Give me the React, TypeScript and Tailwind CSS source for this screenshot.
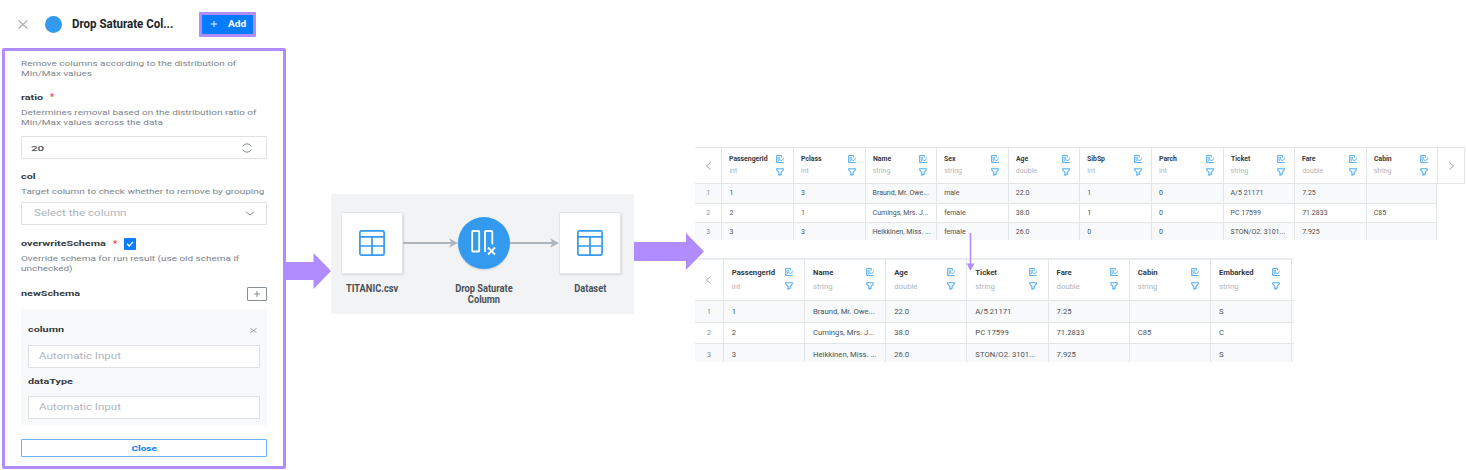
import type { ReactNode } from 'react';

function Wide({ children, className = '' }: { children: ReactNode; className?: string }) {
  return <span className={`inline-block origin-left whitespace-nowrap ${className}`}>{children}</span>;
}

function Hint({ lines }: { lines: string[] }) {
  return (
    <div className="text-[8px] leading-[11px] text-[#7d858c]">
      {lines.map((line) => (
        <div key={line} className="h-[10px]">
          <Wide className="scale-x-[1.247]">{line}</Wide>
        </div>
      ))}
    </div>
  );
}

function Label({ children }: { children: ReactNode }) {
  return (
    <Wide className="scale-x-[1.35] text-[8px] font-bold leading-[10px] text-[#343a40]">{children}</Wide>
  );
}

function Cross({ className }: { className: string }) {
  return (
    <svg className={className} viewBox="0 0 10 10" preserveAspectRatio="none" fill="none" stroke="currentColor" strokeWidth="1.3">
      <path d="M0.5 0.5 9.5 9.5M9.5 0.5 0.5 9.5" />
    </svg>
  );
}

function SettingsPanel() {
  return (
    <section className="flex h-[470px] w-[287px] shrink-0 flex-col pl-[2px]">
      <header className="flex h-[48px] shrink-0 items-center pl-[16px]">
        <Cross className="h-[9px] w-[10px] text-[#a3a9af]" />
        <span className="ml-[17px] h-[17px] w-[17px] rounded-full bg-[#339af0]" />
        <span className="ml-[10px] w-[127px] text-[12px] font-bold text-[#212529]">
          <span className="inline-block origin-left scale-x-[0.96] whitespace-nowrap">Drop Saturate Col...</span>
        </span>
        <button className="flex h-[25px] w-[57px] items-center rounded-[1px] border-[3px] border-[#b08cff] bg-[#087cff] text-white">
          <svg className="ml-[9px] h-[6px] w-[6px]" viewBox="0 0 6 6" stroke="currentColor" strokeWidth="0.9">
            <path d="M3 0V6M0 3H6" />
          </svg>
          <span className="ml-[11px] pt-[1px] text-[8.5px] font-bold">
            <Wide className="scale-x-[1.18]">Add</Wide>
          </span>
        </button>
      </header>
      <div className="flex h-[421px] w-[284px] flex-col rounded-[2px] border-[3px] border-[#b08cff] px-[16px] pt-[7px]">
        <Hint lines={['Remove columns according to the distribution of', 'Min/Max values']} />
        <div className="mt-[13px] flex h-[10px] items-center">
          <span className="w-[29px] leading-[10px]"><Label>ratio</Label></span>
          <span className="pt-[2px] text-[9px] font-bold leading-[10px] text-[#fa3e3e]">*</span>
        </div>
        <div className="mt-[6px]">
          <Hint lines={['Determines removal based on the distribution ratio of', 'Min/Max values across the data']} />
        </div>
        <div className="mt-[9px] flex h-[23px] shrink-0 items-center justify-between rounded-[1px] border border-[#dee2e6] pr-[14px] pl-[9px] text-[8px] text-[#495057]">
          <span className="inline-block origin-left scale-x-[1.45] pt-[2px] font-medium">20</span>
          <svg className="h-[10px] w-[10px] text-[#868e96]" viewBox="0 0 10 10" fill="none" stroke="currentColor">
            <path d="M0.5 3.5Q5 -2 9.5 3.5M0.5 6.5Q5 12 9.5 6.5" />
          </svg>
        </div>
        <div className="mt-[13px] flex h-[10px] items-center"><Label>col</Label></div>
        <div className="mt-[4px]">
          <Hint lines={['Target column to check whether to remove by grouping']} />
        </div>
        <div className="mt-[6px] flex h-[23px] shrink-0 items-center justify-between rounded-[1px] border border-[#dee2e6] pr-[11px] pl-[12px] text-[9px] text-[#adb5bd]">
          <Wide className="scale-x-[1.29] pt-[1px]">Select the column</Wide>
          <svg className="h-[5px] w-[10px] text-[#868e96]" viewBox="0 0 10 5" fill="none" stroke="currentColor">
            <path d="M0.8 0.8 5 4 9.2 0.8" />
          </svg>
        </div>
        <div className="mt-[13px] flex h-[12px] items-center">
          <span className="-mt-[3px] w-[92px] leading-[10px]"><Label>overwriteSchema</Label></span>
          <span className="text-[9px] font-bold leading-[10px] text-[#fa3e3e]">*</span>
          <span className="ml-[7px] flex h-[12px] w-[12px] items-center justify-center rounded-[1px] bg-[#087cff] text-white">
            <svg className="h-[6px] w-[8px]" viewBox="0 0 8 6" fill="none" stroke="currentColor" strokeWidth="1.3">
              <path d="M1 2.8 3.2 5 7 1" />
            </svg>
          </span>
        </div>
        <div className="mt-[3px]">
          <Hint lines={['Override schema for run result (use old schema if', 'unchecked)']} />
        </div>
        <div className="mt-[13px] flex h-[15px] items-center justify-between">
          <Label>newSchema</Label>
          <span className="flex h-[14px] w-[20px] items-center justify-center rounded-[1px] border border-[#868e96] text-[#868e96]">
            <svg className="h-[6px] w-[6px]" viewBox="0 0 6 6" stroke="currentColor">
              <path d="M3 0V6M0 3H6" />
            </svg>
          </span>
        </div>
        <div className="mt-[8px] flex h-[116px] shrink-0 flex-col bg-[#f8f9fb] px-[7px] pt-[16px]">
          <div className="flex h-[10px] items-center justify-between pr-[3px]">
            <Label>column</Label>
            <Cross className="h-[5px] w-[7px] text-[#868e96]" />
          </div>
          <div className="mt-[10px] flex h-[23px] items-center border border-[#dee2e6] bg-white pl-[10px] text-[9px] text-[#adb5bd]">
            <Wide className="scale-x-[1.28] pt-[1px]">Automatic Input</Wide>
          </div>
          <div className="mt-[9px] flex h-[10px] items-center"><Label>dataType</Label></div>
          <div className="mt-[9px] flex h-[23px] items-center border border-[#dee2e6] bg-white pl-[10px] text-[9px] text-[#adb5bd]">
            <Wide className="scale-x-[1.28] pt-[1px]">Automatic Input</Wide>
          </div>
        </div>
        <button className="mt-[14px] flex h-[18px] shrink-0 items-center justify-center rounded-[1px] border border-[#6cb2fb] text-[8px] font-bold text-[#087cff]">
          <span className="inline-block scale-x-[1.25] pt-[1px]">Close</span>
        </button>
      </div>
    </section>
  );
}

function TableIcon() {
  return (
    <svg className="h-[26px] w-[26px]" viewBox="0 0 26 26" fill="none" stroke="#339af0" strokeWidth="1.7">
      <rect x="0.9" y="0.9" width="24.2" height="24.2" rx="1.5" />
      <path d="M1 6.8H25M1 16H25M13 6.8V25" />
    </svg>
  );
}

function Connector() {
  return (
    <svg className="h-[10px] w-full" viewBox="0 0 56 10" preserveAspectRatio="xMaxYMid slice">
      <path d="M0 5H50" stroke="#adb5bd" strokeWidth="1.8" />
      <path d="M47 0.3 56 5 47 9.7 49.5 5Z" fill="#adb5bd" />
    </svg>
  );
}

function NodeCard() {
  return (
    <div className="flex h-[62px] w-[62px] shrink-0 items-center justify-center rounded-[1px] border border-[#e3e6e9] bg-white shadow-[1px_1px_2px_rgba(0,0,0,0.12)]">
      <TableIcon />
    </div>
  );
}

function Caption({ children }: { children: ReactNode }) {
  return (
    <div className="flex w-[80px] justify-center text-center text-[10px] font-bold leading-[10.5px] text-[#495057]">
      <span className="inline-block scale-x-[0.93] whitespace-nowrap">{children}</span>
    </div>
  );
}

function Flow() {
  return (
    <section className="mt-[194px] h-[120px] w-[303px] shrink-0 bg-[#f1f3f5] pt-[18px]">
      <div className="flex items-center pl-[10px]">
        <NodeCard />
        <div className="flex w-[55px] shrink-0"><Connector /></div>
        <div className="flex h-[52px] w-[52px] shrink-0 items-center justify-center rounded-full bg-[#339af0] shadow-[0_1px_2px_rgba(0,0,0,0.15)]">
          <svg className="h-[26px] w-[26px]" viewBox="0 0 26 26" fill="none" stroke="white" strokeWidth="1.8">
            <rect x="1.2" y="1" width="7" height="20.5" rx="0.8" />
            <path d="M14 22V1.8Q14 1 14.8 1H20.5Q21.3 1 21.3 1.8V14.5" />
            <path d="M17 17.5 24 24.5M24 17.5 17 24.5" />
          </svg>
        </div>
        <div className="flex w-[49px] shrink-0"><Connector /></div>
        <NodeCard />
      </div>
      <div className="mt-[10px] flex">
        <div className="w-[82px] shrink-0 pl-[1px]"><Caption>TITANIC.csv</Caption></div>
        <div className="ml-[31px] w-[80px] shrink-0"><Caption>Drop Saturate<br />Column</Caption></div>
        <div className="ml-[26px] w-[80px] shrink-0"><Caption>Dataset</Caption></div>
      </div>
    </section>
  );
}

function ChartIcon() {
  return (
    <svg className="h-[8px] w-[8px]" viewBox="0 0 8 8" fill="none" stroke="#339af0" strokeWidth="0.8">
      <path d="M7.8 7.5H0.6V0.5H5.4V2.6" />
      <path d="M2.1 5.4V1.8M3.6 3.6V1.8" />
      <path d="M1.6 6.6 3.8 4.4 5.4 6 7.7 3.6V2.6" />
    </svg>
  );
}

function FunnelIcon() {
  return (
    <svg className="h-[8px] w-[8px]" viewBox="0 0 8 8" fill="none" stroke="#4dabf7" strokeWidth="1.1" strokeLinejoin="round">
      <path d="M0.7 0.7H7.3V2L5.1 4.4V6.6L2.9 7.3V4.4L0.7 2Z" />
    </svg>
  );
}

function Chevron({ flip = false }: { flip?: boolean }) {
  return (
    <svg className="h-[8px] w-[5px]" viewBox="0 0 5 8" fill="none" stroke="#939aa1" strokeWidth="0.9">
      <path d={flip ? 'M0.5 0.5 4.5 4 0.5 7.5' : 'M4.5 0.5 0.5 4 4.5 7.5'} />
    </svg>
  );
}

type Column = { name: string; type: string; cells: string[] };

const passengerId: Column = { name: 'PassengerId', type: 'int', cells: ['1', '2', '3'] };
const pclass: Column = { name: 'Pclass', type: 'int', cells: ['3', '1', '3'] };
const fullName: Column = { name: 'Name', type: 'string', cells: ['Braund, Mr. Owe...', 'Cumings, Mrs. J...', 'Heikkinen, Miss. ...'] };
const sex: Column = { name: 'Sex', type: 'string', cells: ['male', 'female', 'female'] };
const age: Column = { name: 'Age', type: 'double', cells: ['22.0', '38.0', '26.0'] };
const sibSp: Column = { name: 'SibSp', type: 'int', cells: ['1', '1', '0'] };
const parch: Column = { name: 'Parch', type: 'int', cells: ['0', '0', '0'] };
const ticket: Column = { name: 'Ticket', type: 'string', cells: ['A/5 21171', 'PC 17599', 'STON/O2. 3101...'] };
const fare: Column = { name: 'Fare', type: 'double', cells: ['7.25', '71.2833', '7.925'] };
const cabin: Column = { name: 'Cabin', type: 'string', cells: ['', 'C85', ''] };
const embarked: Column = { name: 'Embarked', type: 'string', cells: ['S', 'C', 'S'] };

const before = [passengerId, pclass, fullName, sex, age, sibSp, parch, ticket, fare, cabin];
const after = [passengerId, fullName, age, ticket, fare, cabin, embarked];
const rows = [0, 1, 2];

function BeforeTable() {
  return (
    <div className="h-[93px] w-[770px] overflow-hidden border-t border-[#dee2e6] text-[7px] leading-[9px] text-[#495057]">
      <div className="grid h-[36px] grid-cols-[26.4px_repeat(10,71.6px)_27.6px] border-b border-[#e3e6e9]">
        <div className="flex items-center justify-center"><Chevron /></div>
        {before.map((c) => (
          <div key={c.name} className="flex justify-between border-l border-[#e3e6e9] pt-[7px] pr-[9px] pl-[7px]">
            <div>
              <div className="origin-left scale-x-[0.98] font-bold whitespace-nowrap text-[#343a40]">{c.name}</div>
              <div className="mt-[3px] text-[#adb5bd]">{c.type}</div>
            </div>
            <div className="flex flex-col items-center gap-[5px]">
              <ChartIcon />
              <FunnelIcon />
            </div>
          </div>
        ))}
        <div className="flex items-center justify-center border-x border-[#e3e6e9]"><Chevron flip /></div>
      </div>
      {rows.map((r) => (
        <div key={r} className="grid h-[19.5px] w-[742.4px] grid-cols-[26.4px_repeat(10,71.6px)] border-r border-b border-[#e3e6e9] odd:bg-white even:bg-[#f8f9fb]">
          <div className="flex items-center justify-center pt-[1px] text-[#868e96]">{r + 1}</div>
          {before.map((c) => (
            <div key={c.name} className="flex items-center border-l border-[#e3e6e9] pt-[1px] pl-[7px] whitespace-nowrap">
              {c.cells[r]}
            </div>
          ))}
        </div>
      ))}
    </div>
  );
}

function AfterTable() {
  return (
    <div className="mt-[18px] h-[104px] w-[599px] overflow-hidden border-t-2 border-[#e9ecef] text-[7.7px] leading-[10px] text-[#495057]">
      <div className="grid h-[41px] grid-cols-[27.8px_repeat(7,81.2px)_2px] border-b border-[#e3e6e9]">
        <div className="flex items-center justify-center"><Chevron /></div>
        {after.map((c) => (
          <div key={c.name} className="flex justify-between border-l border-[#e3e6e9] pt-[8px] pr-[11px] pl-[8px]">
            <div>
              <div className="font-bold whitespace-nowrap text-[#343a40]">{c.name}</div>
              <div className="mt-[4px] text-[#adb5bd]">{c.type}</div>
            </div>
            <div className="flex flex-col items-center gap-[6px]">
              <ChartIcon />
              <FunnelIcon />
            </div>
          </div>
        ))}
        <div className="border-l border-[#e3e6e9]" />
      </div>
      {rows.map((r) => (
        <div key={r} className="grid h-[21.6px] grid-cols-[27.8px_repeat(7,81.2px)_2px] border-b border-[#e3e6e9] odd:bg-white even:bg-[#f8f9fb]">
          <div className="flex items-center justify-center pt-[1px] text-[#868e96]">{r + 1}</div>
          {after.map((c) => (
            <div key={c.name} className="flex items-center border-l border-[#e3e6e9] pt-[1px] pl-[8px] whitespace-nowrap">
              {c.cells[r]}
            </div>
          ))}
          <div className="border-l border-[#e3e6e9]" />
        </div>
      ))}
    </div>
  );
}

export default function App() {
  return (
    <main className="relative flex h-[470px] w-[1466px] overflow-hidden bg-white font-[Roboto,sans-serif]">
      <SettingsPanel />
      <svg className="mt-[253px] -ml-[4px] h-[36px] w-[48px] shrink-0" viewBox="0 0 48 36">
        <path d="M0 9H30.5V0L48 18 30.5 36V27H0Z" fill="#b08cff" />
      </svg>
      <Flow />
      <svg className="relative mt-[233px] h-[37px] w-[70px] shrink-0" viewBox="0 0 70 37">
        <path d="M0 9H52V0L70 18.5 52 37V28H0Z" fill="#b08cff" />
      </svg>
      <section className="-ml-[9px] w-[770px] shrink-0 pt-[147px]">
        <BeforeTable />
        <AfterTable />
      </section>
      <svg className="absolute top-[233px] left-[966px] h-[38px] w-[9px]" viewBox="0 0 9 38">
        <path d="M4.5 0V32" stroke="#b08cff" strokeWidth="1.6" />
        <path d="M0.7 30.5H8.3L4.5 38Z" fill="#b08cff" />
      </svg>
    </main>
  );
}
